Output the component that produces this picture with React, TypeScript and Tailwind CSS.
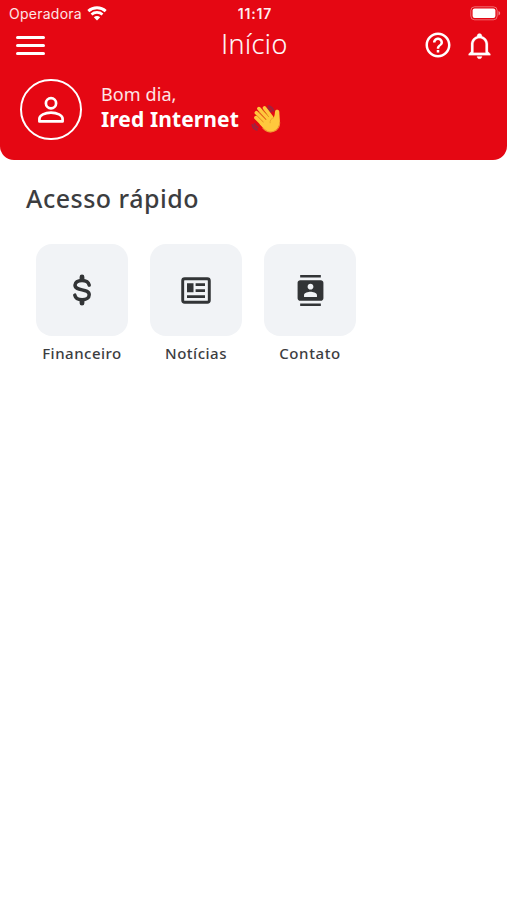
import React from 'react';
import { MdContacts, MdHelpOutline } from 'react-icons/md';

const WifiIcon: React.FC = () => (
  <svg width={20} height={15} viewBox="0 0 20 15" fill="none" stroke="#fff">
    <path d="M1.3 5.100C6.200.6 13.800.6 18.700 5.100" strokeWidth={2.800} />
    <path d="M4.500 8.500c3.100-2.800 7.900-2.800 11 0" strokeWidth={2.600} />
    <path d="M10 14.400 6.800 11.200c1.800-1.600 4.600-1.600 6.400 0z" fill="#fff" stroke="none" />
  </svg>
);

const BatteryIcon: React.FC = () => (
  <svg width={31} height={15} viewBox="0 0 31 15" fill="none">
    <rect x={0.8} y={0.8} width={26.400} height={13} rx={3.800} stroke="#fff" strokeOpacity={0.4} />
    <rect x={2.600} y={2.600} width={22.800} height={9.400} rx={2} fill="#fff" />
    <path d="M28.500 5.100c2.200.8 2.200 3.600 0 4.400z" fill="#fff" fillOpacity={0.5} />
  </svg>
);

const BellIcon: React.FC = () => (
  <svg width={29} height={29} viewBox="0 0 24 24" fill="#fff" stroke="#fff" strokeWidth={0.2}>
    <path d="M10 21h4c0 1.100-.9 2-2 2s-2-.9-2-2m11-2v1H3v-1l2-2v-6c0-3.100 2-5.800 5-6.700V4c0-1.100.9-2 2-2s2 .9 2 2v.3c3 .9 5 3.600 5 6.700v6l2 2m-4-8c0-2.800-2.200-5-5-5s-5 2.200-5 5v7h10v-7z" />
  </svg>
);

const PersonIcon: React.FC = () => (
  <svg width={28} height={28} viewBox="0 0 28 28" fill="none" stroke="#fff" strokeWidth={2.700} strokeLinejoin="round">
    <circle cx={14} cy={7.200} r={5.100} />
    <path d="M2.400 25.400v-2.600c0-3.600 5.600-6.200 11.600-6.200s11.600 2.600 11.600 6.200v2.600z" />
  </svg>
);

const WaveIcon: React.FC = () => (
  <svg width={31} height={31} viewBox="0 0 30 30" fill="none" strokeLinecap="round" strokeLinejoin="round">
    <g stroke="#9c2340" strokeWidth={1.900}>
      <path d="M17 2.200c2.300.4 4 2.200 4.600 4.400M16.400 4.400c1.500.5 2.500 1.500 3 3" />
      <path d="M1.400 20.300c.4 2.300 2 4 4.200 4.700M3.500 19.400c.4 1.600 1.300 2.700 2.900 3.300" />
    </g>
    <g stroke="#ffc83d" strokeWidth={3.500}>
      <path d="M4.800 13.200 13 21.500" />
      <path d="M5.200 8.400 15 18.500" />
      <path d="M7.600 4.400 17.500 15.200" />
      <path d="M13 3.800 20 13" />
    </g>
    <path d="M10 19.500 19.300 10.500 22 13.200c1.200-2.400.9-4.400 1.400-6.400.5-1.800 3.900-1.400 4 .6.100 2.600.4 5 .5 8.200.3 4.500-1.400 8.300-4.700 10.400-4 2.500-7.700 1-10.500-1.900L8 19z" fill="#ffc83d" />
    <path d="M6.300 11.700 12 17.300M7.600 7.800l7 7.200M11.500 6.200l5.600 6.200" stroke="#e39a20" strokeWidth={0.8} />
    <path d="M22 13.200c-2.500.8-3.800 2.600-3.500 5" stroke="#e9a52a" strokeWidth={0.9} />
    <path d="M11.500 23.300c3 3.300 6.700 4.500 10.700 3 3.500-1.200 5.500-4.500 5.600-8.500" stroke="#f19534" strokeWidth={1} />
  </svg>
);

const DollarIcon: React.FC = () => (
  <svg width={32} height={32} viewBox="0 0 32 32" fill="none" stroke="#323436" strokeWidth={3.500} strokeLinecap="round">
    <path d="M23.200 11.100C22.600 8.300 19.800 6.400 16 6.400c-4.200 0-7 2-7 4.700 0 6.700 14.200 2.900 14.200 9.600 0 3-2.900 5-7.100 5-3.800 0-6.700-1.800-7.300-4.600" />
    <path d="M16 2.900v2.500M16 26.700v2.500" strokeWidth={4.800} />
  </svg>
);

const NewsIcon: React.FC = () => (
  <svg width={30} height={27} viewBox="0 0 30 27" fill="#323436">
    <rect x={1.700} y={1.700} width={26.600} height={23.600} rx={2} fill="none" stroke="#323436" strokeWidth={2.900} />
    <path d="M6 6.200h6.500v9H6zM14.600 6.200H24v2.800h-9.400zM14.600 12.200H24V15h-9.400zM6 18.200h18V21H6z" />
  </svg>
);

const shortcuts = [
  { label: 'Financeiro', icon: <DollarIcon />, tracking: 'tracking-[0.5px]' },
  { label: 'Notícias', icon: <NewsIcon />, tracking: 'tracking-[0.5px]' },
  { label: 'Contato', icon: <MdContacts size={31} color="#323436" />, tracking: 'tracking-[0.6px]' },
];

export default function App() {
  return (
    <div className="min-h-screen w-full bg-white font-['Noto_Sans',sans-serif] text-[#3c3d3f]">
      <header className="h-[160px] rounded-b-[14px] bg-[#e50713] text-white">
        {/* Status bar */}
        <div className="grid h-[27px] grid-cols-3 items-center pl-[9px] pr-[6px] font-['Inter',sans-serif] leading-none">
          <div className="flex items-center gap-[5px]">
            <span className="text-[14px] tracking-[0.25px] text-white/90">Operadora</span>
            <WifiIcon />
          </div>
          <span className="pt-px text-center text-[14px] font-semibold tracking-[0.8px] text-white/95">11:17</span>
          <div className="flex justify-end">
            <BatteryIcon />
          </div>
        </div>

        {/* Title bar */}
        <div className="grid h-[37px] grid-cols-3 items-center pl-4 pr-[13px]">
          <div className="flex w-[29px] flex-col gap-[5px]">
            <div className="h-[3px] rounded-full bg-white"></div>
            <div className="h-[3px] rounded-full bg-white"></div>
            <div className="h-[3px] rounded-full bg-white"></div>
          </div>
          <h1 className="pb-[4px] pr-px text-center font-['Open_Sans',sans-serif] text-[27px] font-light leading-none tracking-[0.5px] [-webkit-text-stroke:0.2px_white]">
            Início
          </h1>
          <div className="flex items-center justify-end gap-[12px] pb-px">
            <MdHelpOutline size={30} />
            <BellIcon />
          </div>
        </div>

        {/* Greeting */}
        <div className="flex items-center pl-[20px] pt-[15px]">
          <div className="flex h-[61px] w-[62px] items-center justify-center rounded-full border-2 border-white">
            <PersonIcon />
          </div>
          <div className="ml-[19px] pb-[5px]">
            <p className="text-[18px] leading-[24px] tracking-[0.1px] text-white/90">Bom dia,</p>
            <div className="flex h-[26px] items-center gap-[12px]">
              <p className="text-[21px] font-bold leading-[26px] tracking-[0.1px]">Ired Internet</p>
              <WaveIcon />
            </div>
          </div>
        </div>
      </header>

      <main>
        <h2 className="pl-[26px] pt-[21px] text-[25px] font-medium leading-[34px] tracking-[0.5px]">Acesso rápido</h2>
        <div className="flex gap-[22px] pl-[36px] pt-[29px]">
          {shortcuts.map((item) => (
            <div key={item.label} className="flex w-[92px] flex-col items-center">
              <div className="flex h-[92px] w-[92px] items-center justify-center rounded-[16px] bg-[#f1f3f6]">
                {item.icon}
              </div>
              <span className={`mt-[7px] text-[15px] font-medium leading-[20px] ${item.tracking}`}>{item.label}</span>
            </div>
          ))}
        </div>
      </main>
    </div>
  );
}
